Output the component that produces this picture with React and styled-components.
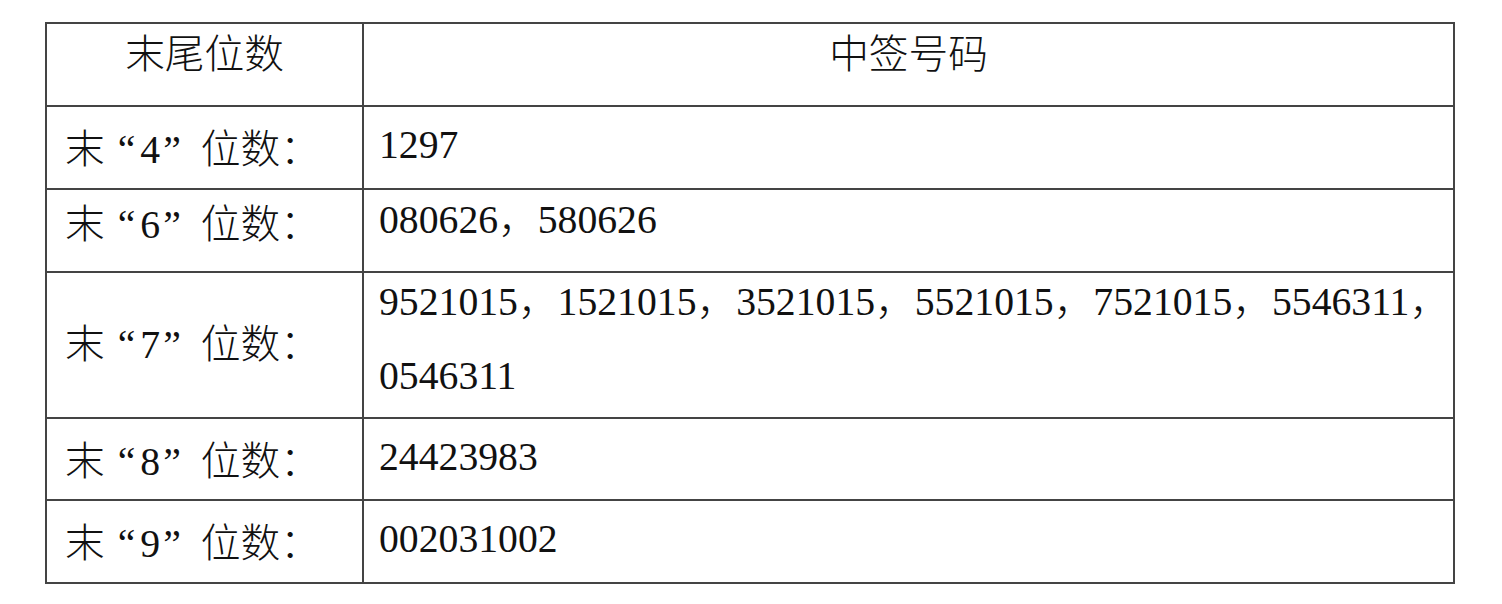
import React from "react";
import styled, { createGlobalStyle } from "styled-components";

const GlobalStyle = createGlobalStyle`
  html, body {
    margin: 0;
    background: #ffffff;
  }
`;

const Page = styled.div`
  padding: 22px 0 0 45px;
`;

const Table = styled.table`
  width: 1410px;
  border-collapse: collapse;
  table-layout: fixed;
  font-family: "Liberation Serif", "Noto Sans CJK SC", serif;
  font-size: 39.7px;
  font-weight: 300;
  line-height: 44px;
  color: #111111;
`;

const Row = styled.tr`
  height: ${(p) => p.$h}px;
`;

const HeadCell = styled.th`
  border: 2px solid #444444;
  font-weight: 300;
  text-align: center;
  vertical-align: top;
  padding: 9px 0 0 0;
  white-space: nowrap;
`;

const LabelCell = styled.td`
  border: 2px solid #444444;
  vertical-align: ${(p) => (p.$middle ? "middle" : "top")};
  padding: ${(p) => (p.$middle ? 0 : p.$top)}px 0 0 18px;
  white-space: nowrap;
`;

const ValueCell = styled.td`
  border: 2px solid #444444;
  vertical-align: top;
  padding: ${(p) => p.$top}px 0 0 15px;
  white-space: nowrap;
`;

const Line = styled.div`
  & + & {
    margin-top: 30px;
  }
`;

const OpenQuote = styled.span`
  font-family: "Liberation Serif", serif;
  margin: 0 5px 0 13px;
`;

const CloseQuote = styled.span`
  font-family: "Liberation Serif", serif;
  margin: 0 20px 0 3px;
`;

const rows = [
  { digits: "4", h: 83, top: 16, lines: ["1297"] },
  { digits: "6", h: 83, top: 8, lines: ["080626，580626"] },
  {
    digits: "7",
    h: 146,
    top: 7,
    middle: true,
    lines: [
      "9521015，1521015，3521015，5521015，7521015，5546311，",
      "0546311",
    ],
  },
  { digits: "8", h: 82, top: 16, lines: ["24423983"] },
  { digits: "9", h: 83, top: 16, lines: ["002031002"] },
];

export default function App() {
  return (
    <>
      <GlobalStyle />
      <Page>
        <Table>
          <colgroup>
            <col style={{ width: 317 }} />
            <col />
          </colgroup>
          <thead>
            <Row $h={83}>
              <HeadCell>末尾位数</HeadCell>
              <HeadCell>中签号码</HeadCell>
            </Row>
          </thead>
          <tbody>
            {rows.map((r) => (
              <Row key={r.digits} $h={r.h}>
                <LabelCell $top={r.top + 5} $middle={r.middle}>
                  末<OpenQuote>“</OpenQuote>
                  {r.digits}
                  <CloseQuote>”</CloseQuote>位数：
                </LabelCell>
                <ValueCell $top={r.top}>
                  {r.lines.map((l) => (
                    <Line key={l}>{l}</Line>
                  ))}
                </ValueCell>
              </Row>
            ))}
          </tbody>
        </Table>
      </Page>
    </>
  );
}
